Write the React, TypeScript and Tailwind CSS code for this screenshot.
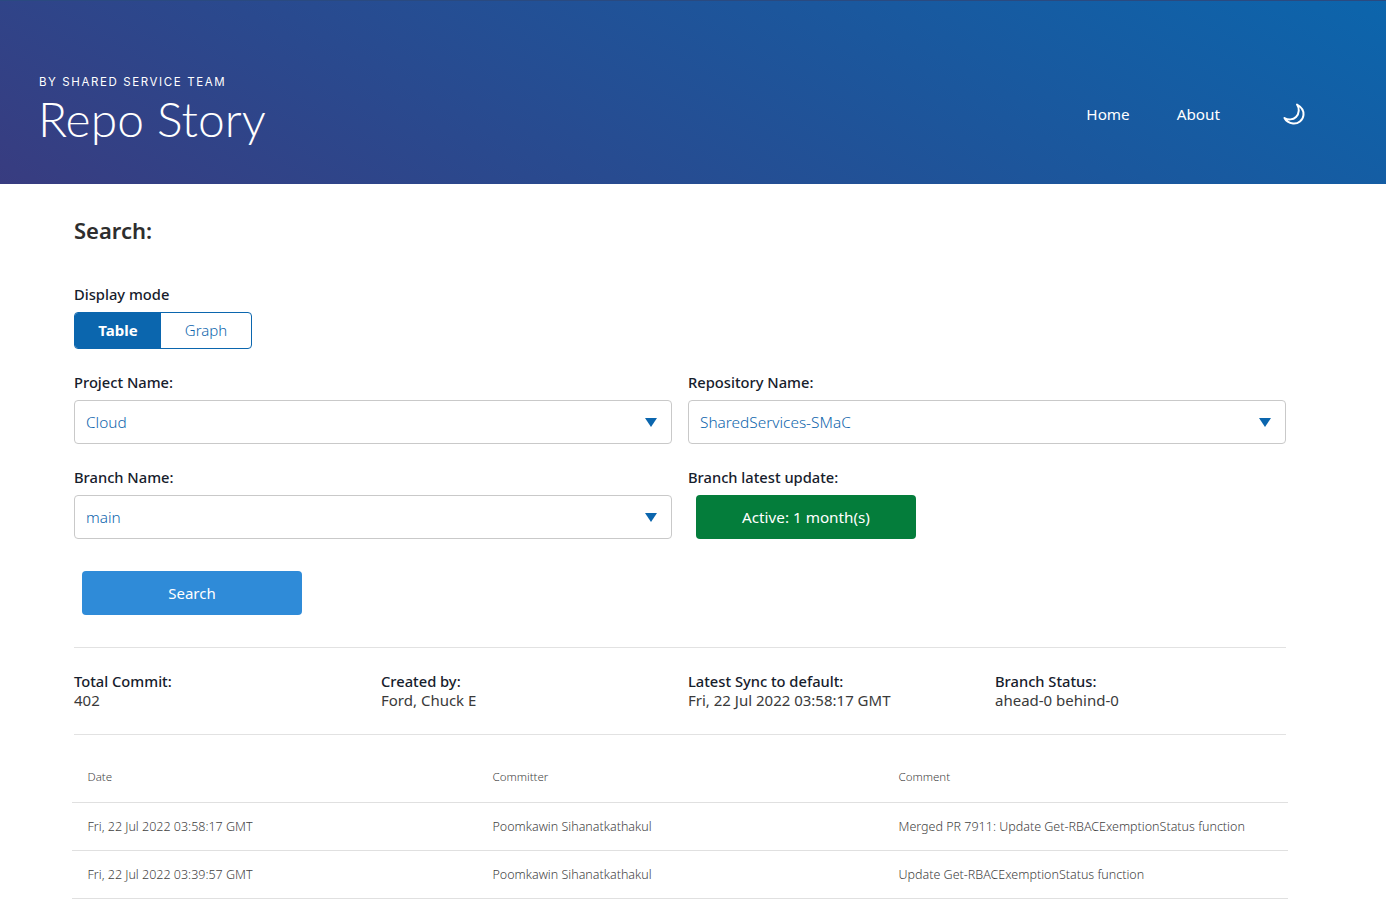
import React from "react";

const rows = [
	{
		date: "Fri, 22 Jul 2022 03:58:17 GMT",
		committer: "Poomkawin Sihanatkathakul",
		comment: "Merged PR 7911: Update Get-RBACExemptionStatus function",
	},
	{
		date: "Fri, 22 Jul 2022 03:39:57 GMT",
		committer: "Poomkawin Sihanatkathakul",
		comment: "Update Get-RBACExemptionStatus function",
	},
];

const stats = [
	{ label: "Total Commit:", value: "402" },
	{ label: "Created by:", value: "Ford, Chuck E" },
	{ label: "Latest Sync to default:", value: "Fri, 22 Jul 2022 03:58:17 GMT" },
	{ label: "Branch Status:", value: "ahead-0 behind-0" },
];

const SelectBox: React.FC<{ label: string; value: string }> = ({ label, value }) => (
	<div>
		<div className="h-[23px] text-[14.7px] leading-[20px] font-medium text-[#16202c]">{label}</div>
		<div className="mt-[5px] h-[44px] flex items-center justify-between border border-[#c9c9c9] rounded-[4px] pl-[11px] pr-[14px] text-[#0f66ad]">
			<span className="text-[15.4px] leading-[20px] pt-[2px] font-light">{value}</span>
			<svg width="12" height="9" viewBox="0 0 12 9">
				<path d="M0 0h12L6 9z" fill="#0b66ae" />
			</svg>
		</div>
	</div>
);

const App: React.FC = () => {
	return (
		<div className="h-[899px] overflow-hidden bg-white font-['Noto_Sans','Open_Sans',sans-serif]">
			<header className="h-[184px] border-t border-[#2a4a80] bg-linear-[30deg] from-[#383c80] to-[#0c65ac] flex items-start justify-between pl-[39px] pr-[80px] text-white">
				<div className="pt-[74px]">
					<div className="text-[11.5px] leading-[14px] tracking-[1.6px] font-['Inter',sans-serif]">BY SHARED SERVICE TEAM</div>
					<h1 className="mt-[3px] -ml-[1px] text-[48px] leading-[54px] font-light font-['Lato',sans-serif]">Repo Story</h1>
				</div>
				<nav className="flex items-center pt-[98px] text-[15.25px] leading-[30px]">
					<a className="mr-[47px]">Home</a>
					<a className="mr-[62px]">About</a>
					<svg width="24" height="24" viewBox="0 0 24 24" fill="none" stroke="white" strokeWidth="2" strokeLinejoin="round">
						<path d="M15 2.5C19.5 5 22 8 21.5 13C21 18.5 16 22 11 21.5C7 21 4 19 2.5 16C6 18 11 18 14 15C17.5 11.5 17.5 6 15 2.5Z" />
					</svg>
				</nav>
			</header>

			<main className="pl-[74px] pr-[100px]">
				<h2 className="pt-[30px] text-[22px] leading-[32px] font-semibold text-[#2e2e2e]">Search:</h2>
				<div className="mt-[38px] text-[14.7px] leading-[20px] font-medium text-[#16202c]">Display mode</div>
				<div className="mt-[8px] flex w-[178px] h-[37px] border border-[#0b66ae] rounded-[4px] overflow-hidden text-[15px]">
					<div className="w-[86px] flex items-center justify-center bg-[#0b66ae] text-white font-bold">Table</div>
					<div className="flex-1 flex items-center justify-center font-light text-[#0f66ad]">Graph</div>
				</div>

				<div className="mt-[23px] grid grid-cols-2 gap-x-[16px] gap-y-[23px]">
					<SelectBox label="Project Name:" value="Cloud" />
					<SelectBox label="Repository Name:" value="SharedServices-SMaC" />
					<SelectBox label="Branch Name:" value="main" />
					<div>
						<div className="h-[23px] text-[14.7px] leading-[20px] font-medium text-[#16202c]">Branch latest update:</div>
						<div className="mt-[5px] ml-[8px] w-[220px] h-[44px] flex items-center justify-center rounded-[4px] bg-[#047d3b] text-white text-[15.25px]">
							Active: 1 month(s)
						</div>
					</div>
				</div>

				<button className="mt-[32px] ml-[8px] w-[220px] h-[44px] rounded-[4px] bg-[#2f8bd8] text-white text-[15px]">Search</button>

				<div className="mt-[32px] border-t border-[#e2e2e2] grid grid-cols-[307px_307px_307px_1fr] pt-[24px] pb-[24px] text-[15px] leading-[19px]">
					{stats.map((s) => (
						<div key={s.label}>
							<div className="text-[14.7px] font-medium text-[#16202c]">{s.label}</div>
							<div className="text-[#3a3a3a]">{s.value}</div>
						</div>
					))}
				</div>

				<div className="border-t border-[#e2e2e2]" />
				<table className="mt-[17px] -mx-[2px] w-[1216px] table-fixed text-[12.5px] font-light text-[#3f3f3f]">
					<thead>
						<tr className="h-[50px] border-b border-[#e0e0e0]">
							<th className="w-[405px] pl-[15.5px] pb-[1px] text-left font-light text-[11.5px]">Date</th>
							<th className="w-[406px] pl-[15.5px] pb-[1px] text-left font-light text-[11.5px]">Committer</th>
							<th className="pl-[15.5px] pb-[1px] text-left font-light text-[11.5px]">Comment</th>
						</tr>
					</thead>
					<tbody>
						{rows.map((r) => (
							<tr key={r.date} className="h-[48px] border-b border-[#e0e0e0]">
								<td className="pl-[15.5px] pt-[2px]">{r.date}</td>
								<td className="pl-[15.5px] pt-[2px]">{r.committer}</td>
								<td className="pl-[15.5px] pt-[2px]">{r.comment}</td>
							</tr>
						))}
					</tbody>
				</table>
			</main>
		</div>
	);
};

export default App;
